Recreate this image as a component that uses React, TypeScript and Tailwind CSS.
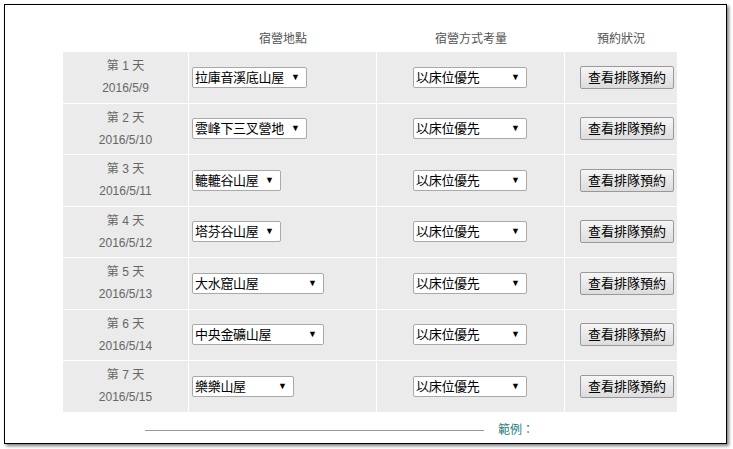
import React from "react";

const rows = [
  ["第 1 天", "2016/5/9", "拉庫音溪底山屋", 115],
  ["第 2 天", "2016/5/10", "雲峰下三叉營地", 115],
  ["第 3 天", "2016/5/11", "轆轆谷山屋", 89],
  ["第 4 天", "2016/5/12", "塔芬谷山屋", 89],
  ["第 5 天", "2016/5/13", "大水窟山屋", 132],
  ["第 6 天", "2016/5/14", "中央金礦山屋", 132],
  ["第 7 天", "2016/5/15", "樂樂山屋", 102],
] as const;

const font = { fontFamily: '"Liberation Sans", "Noto Sans CJK TC", sans-serif' };

function Sel({ text, w }: { text: string; w: number }) {
  return (
    <div
      className="h-[21px] flex items-center justify-between whitespace-nowrap border border-[#a9a9a9] bg-white pl-[2px] pr-[6px] text-[13px] text-black rounded-[2px]"
      style={{ width: w }}
    >
      <span className="tracking-[-0.3px]">{text}</span>
      <span className="text-[9px] ml-[4px]">▼</span>
    </div>
  );
}

export default function App() {
  return (
    <div className="w-[733px] h-[449px] bg-white relative" style={font}>
      <div className="absolute left-[4px] top-[4px] w-[723px] h-[440px] border border-black shadow-[2px_2px_3px_rgba(0,0,0,0.5)] bg-white">
        <div className="ml-[58px] mt-[21px] w-[614px]">
          <div className="flex h-[26px] items-center text-[12px] text-[#555]">
            <div className="w-[126px]" />
            <div className="w-[188px] text-center">宿營地點</div>
            <div className="w-[188px] text-center">宿營方式考量</div>
            <div className="w-[112px] text-center">預約狀況</div>
          </div>
          {rows.map(([d, date, place, w]) => (
            <div key={d} className="flex h-[51.5px] bg-[#ebebeb] border-b border-white">
              <div className="w-[126px] border-r border-white flex flex-col items-center justify-center text-[12px] text-[#666] leading-[22px]">
                <div>{d}</div>
                <div>{date}</div>
              </div>
              <div className="w-[188px] border-r border-white flex items-center pl-[3px]">
                <Sel text={place} w={w} />
              </div>
              <div className="w-[188px] border-r border-white flex items-center pl-[36px]">
                <Sel text="以床位優先" w={114} />
              </div>
              <div className="w-[112px] flex items-center pl-[15px]">
                <div className="h-[23px] w-[94px] flex items-center justify-center whitespace-nowrap border border-[#999] rounded-[2px] bg-gradient-to-b from-[#f6f6f6] to-[#dcdcdc] text-[13px] text-black">
                  查看排隊預約
                </div>
              </div>
            </div>
          ))}
        </div>
        <div className="flex items-end mt-[8px]">
          <div className="ml-[140px] w-[339px] h-px bg-[#999] mb-[8px]" />
          <div className="ml-[14px] text-[12px] text-[#2e7d80]">範例：</div>
        </div>
      </div>
    </div>
  );
}
